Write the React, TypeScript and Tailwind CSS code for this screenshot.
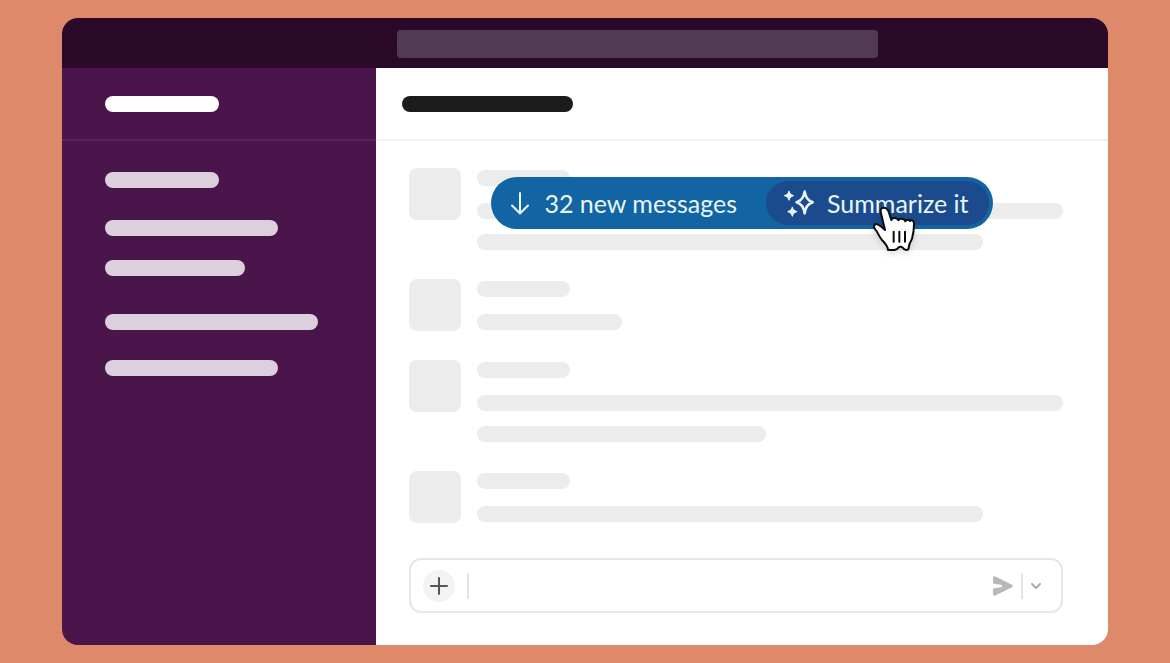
import { clsx } from "clsx";

type Message = { id: number; lines: string[] };

const channels = [
  { id: 1, className: "w-[114px]" },
  { id: 2, className: "mt-8 w-[173px]" },
  { id: 3, className: "mt-6 w-[140px]" },
  { id: 4, className: "mt-[38px] w-[213px]" },
  { id: 5, className: "mt-[30px] w-[173px]" },
];

const messages: Message[] = [
  { id: 1, lines: ["w-full", "w-[506px]"] },
  { id: 2, lines: ["w-[145px]"] },
  { id: 3, lines: ["w-full", "w-[289px]"] },
  { id: 4, lines: ["w-[506px]"] },
];

const ArrowDownIcon = () => (
  <svg
    className="h-6 w-5"
    viewBox="0 0 20 24"
    fill="none"
    stroke="currentColor"
    strokeWidth="2"
    strokeLinecap="round"
    strokeLinejoin="round"
  >
    <path d="M10 2V22.5M2 14.5l8 8 8-8" />
  </svg>
);

const SparklesIcon = () => (
  <svg className="h-[29px] w-[31px]" viewBox="102 84 93 87" fill="currentColor">
    <path
      d="M164 92C167 109 172 118 188 124C172 130 167 139 164 157C161 139 156 130 140 124C156 118 161 109 164 92Z"
      fill="none"
      stroke="currentColor"
      strokeWidth="8"
      strokeLinejoin="round"
    />
    <path
      d="M117 91Q119 102 130 104Q119 106 117 117Q115 106 104 104Q115 102 117 91Z"
      stroke="currentColor"
      strokeWidth="4"
      strokeLinejoin="round"
    />
    <path
      d="M127 139Q129 150 140 152Q129 154 127 165Q125 154 114 152Q125 150 127 139Z"
      stroke="currentColor"
      strokeWidth="4"
      strokeLinejoin="round"
    />
  </svg>
);

const HandCursor = () => (
  <svg
    className="pointer-events-none absolute top-[23px] left-[104px] h-[50px] w-12 drop-shadow-md"
    viewBox="360 132 144 150"
    fill="#fff"
    stroke="#0b0b0b"
    strokeWidth="6"
    strokeLinecap="round"
    strokeLinejoin="round"
  >
    <path d="M405 210L393 160C390 149 394 143 401 143C409 143 413 147 416 155L424 180C426 172 442 171 445 181C448 174 463 175 466 184C469 178 477 178 480 183C485 178 493 183 492 193C492 207 490 222 486 236C480 246 476 254 475 268C467 272 462 270 457 262C455 260 448 260 446 262C441 270 435 271 414 270C414 258 405 249 396 240C387 230 385 219 374 206C369 198 375 190 383 193C392 197 398 203 405 210Z" />
    <path d="M431 215V245M448 215V245M465 215V245" />
  </svg>
);

const SendIcon = () => (
  <svg className="h-5 w-5" viewBox="0 0 20 20" fill="currentColor">
    <path d="M0 2C0 .5 1.2 0 2.4.5L19 8.8C20 9.4 20 10.6 19 11.2L2.4 19.5C1.2 20 0 19.5 0 18V12.6L9 11V9L0 7.4Z" />
  </svg>
);

const Bar = ({ className }: { className?: string }) => (
  <div className={clsx("h-4 max-w-full rounded-full", className)} />
);

const MessageRow = ({ message }: { message: Message }) => (
  <li className="flex gap-4">
    <div className="h-[52px] w-[52px] shrink-0 rounded-lg bg-[#ececec]" />
    <div className="min-w-0 flex-1 pt-0.5">
      <Bar className="mb-[17px] w-[93px] bg-[#ececec]" />
      <div className="space-y-[15px]">
        {message.lines.map((width) => (
          <Bar key={width} className={clsx("bg-[#ececec]", width)} />
        ))}
      </div>
    </div>
  </li>
);

const NewMessages = () => (
  <div className="absolute inset-x-0 top-9 flex justify-center">
    <div className="flex items-center rounded-full bg-[#1264a3] p-1 text-[25px] leading-8 whitespace-nowrap text-[#e8f6fb]">
      <button type="button" className="flex h-11 items-center gap-3.5 pr-[29px] pl-[15px]">
        <ArrowDownIcon />
        32 new messages
      </button>
      <button
        type="button"
        className="relative flex h-11 items-center gap-3 rounded-full bg-[#1b4b8c] pr-5 pl-[18px]"
      >
        <SparklesIcon />
        Summarize it
        <HandCursor />
      </button>
    </div>
  </div>
);

const Composer = () => (
  <form className="mt-[35px] flex h-[55px] items-center rounded-xl border-2 border-[#e6e6e6] px-3">
    <button
      type="button"
      aria-label="Add attachment"
      className="flex h-8 w-8 items-center justify-center rounded-full bg-[#f3f3f3] text-[#555]"
    >
      <svg className="h-[18px] w-[18px]" viewBox="0 0 18 18" stroke="currentColor" strokeWidth="2" strokeLinecap="round">
        <path d="M9 1v16M1 9h16" />
      </svg>
    </button>
    <div className="ml-3 h-[26px] w-0.5 bg-[#e4e4e4]" />
    <input type="text" aria-label="Message" className="h-full min-w-0 flex-1 px-3 text-lg outline-none" />
    <button type="button" aria-label="Send" className="text-[#b8b8b8]">
      <SendIcon />
    </button>
    <div className="ml-2 h-[26px] w-0.5 bg-[#e4e4e4]" />
    <button type="button" aria-label="Send options" className="px-[7px] text-[#aaa]">
      <svg
        className="h-3 w-3"
        viewBox="0 0 12 12"
        fill="none"
        stroke="currentColor"
        strokeWidth="2"
        strokeLinecap="round"
        strokeLinejoin="round"
      >
        <path d="M2 4l4 4 4-4" />
      </svg>
    </button>
  </form>
);

const App = () => {
  return (
    <div className="flex min-h-screen bg-[#de8969] px-[62px] py-[18px] font-['Lato',sans-serif]">
      <div className="flex flex-1 flex-col overflow-hidden rounded-2xl">
        <header className="flex h-[50px] items-center bg-[#2b0928] pt-px pl-[335px]">
          <div className="h-7 w-[481px] rounded-sm bg-[#533a54]" />
        </header>

        <div className="flex flex-1">
          <aside className="w-[314px] shrink-0 bg-[#4a154b]">
            <div className="flex h-[73px] items-center border-b-2 border-[#572658] px-[43px]">
              <Bar className="w-[114px] bg-white" />
            </div>
            <nav className="px-[43px] pt-[31px]">
              {channels.map((channel) => (
                <Bar key={channel.id} className={clsx("bg-[#dbd0db]", channel.className)} />
              ))}
            </nav>
          </aside>

          <main className="min-w-0 flex-1 bg-white">
            <div className="flex h-[73px] items-center border-b-2 border-[#f1f1f1] px-[26px]">
              <Bar className="w-[171px] bg-[#1d1c1d]" />
            </div>
            <div className="relative pt-[27px] pr-[45px] pb-8 pl-[33px]">
              <ul className="space-y-[29px]">
                {messages.map((message) => (
                  <MessageRow key={message.id} message={message} />
                ))}
              </ul>
              <Composer />
              <NewMessages />
            </div>
          </main>
        </div>
      </div>
    </div>
  );
};

export default App;
